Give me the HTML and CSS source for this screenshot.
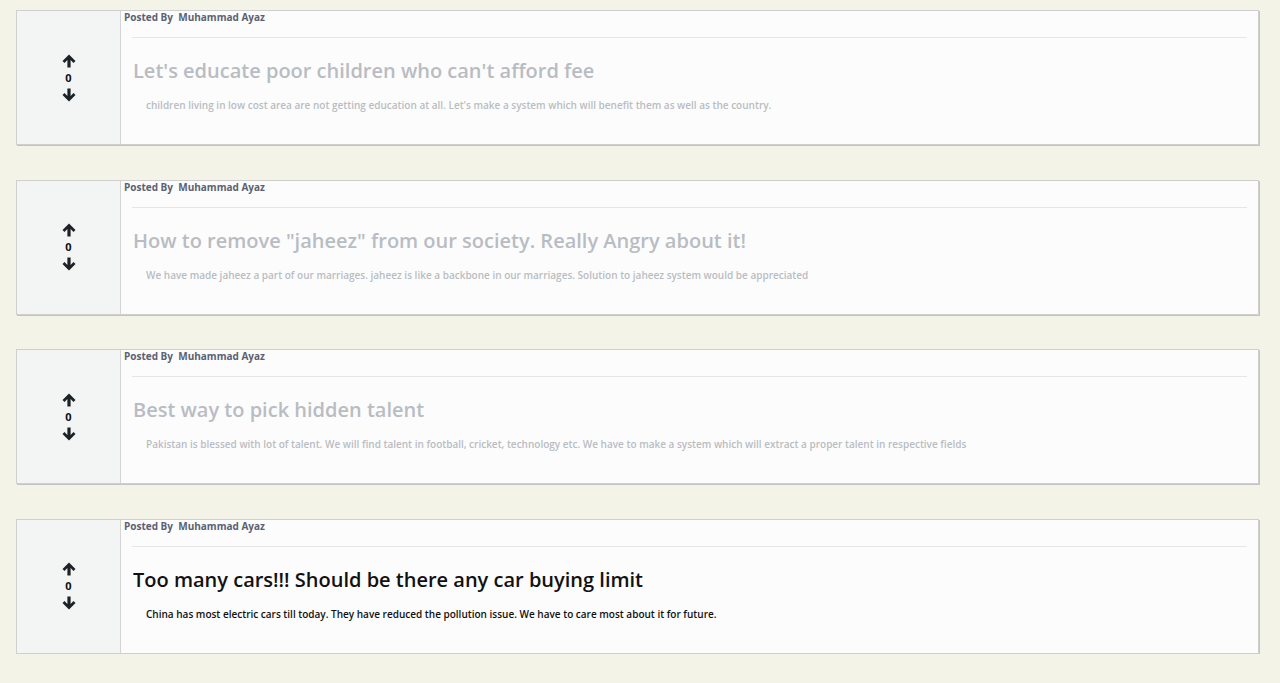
FILE: index.html
```html
<!DOCTYPE html>
<html>
<head>
<meta charset="utf-8">
<link rel="stylesheet" href="styles.css">
</head>
<body>
<div class="list">
  <div class="card faded">
    <div class="vote">
      <svg class="arrow" viewBox="0 0 14 14"><path d="M7 0.5 L13.5 7 L11.5 9 L8.6 6.1 L8.6 13.5 L5.4 13.5 L5.4 6.1 L2.5 9 L0.5 7 Z"/></svg>
      <span class="count">0</span>
      <svg class="arrow" viewBox="0 0 14 14"><path d="M7 13.5 L13.5 7 L11.5 5 L8.6 7.9 L8.6 0.5 L5.4 0.5 L5.4 7.9 L2.5 5 L0.5 7 Z"/></svg>
    </div>
    <div class="body">
      <div class="meta">Posted By&nbsp; Muhammad Ayaz</div>
      <hr class="rule">
      <h2 class="title">Let's educate poor children who can't afford fee</h2>
      <p class="desc">children living in low cost area are not getting education at all. Let's make a system which will benefit them as well as the country.</p>
    </div>
  </div>
  <div class="card faded">
    <div class="vote">
      <svg class="arrow" viewBox="0 0 14 14"><path d="M7 0.5 L13.5 7 L11.5 9 L8.6 6.1 L8.6 13.5 L5.4 13.5 L5.4 6.1 L2.5 9 L0.5 7 Z"/></svg>
      <span class="count">0</span>
      <svg class="arrow" viewBox="0 0 14 14"><path d="M7 13.5 L13.5 7 L11.5 5 L8.6 7.9 L8.6 0.5 L5.4 0.5 L5.4 7.9 L2.5 5 L0.5 7 Z"/></svg>
    </div>
    <div class="body">
      <div class="meta">Posted By&nbsp; Muhammad Ayaz</div>
      <hr class="rule">
      <h2 class="title">How to remove "jaheez" from our society. Really Angry about it!</h2>
      <p class="desc">We have made jaheez a part of our marriages. jaheez is like a backbone in our marriages. Solution to jaheez system would be appreciated</p>
    </div>
  </div>
  <div class="card faded">
    <div class="vote">
      <svg class="arrow" viewBox="0 0 14 14"><path d="M7 0.5 L13.5 7 L11.5 9 L8.6 6.1 L8.6 13.5 L5.4 13.5 L5.4 6.1 L2.5 9 L0.5 7 Z"/></svg>
      <span class="count">0</span>
      <svg class="arrow" viewBox="0 0 14 14"><path d="M7 13.5 L13.5 7 L11.5 5 L8.6 7.9 L8.6 0.5 L5.4 0.5 L5.4 7.9 L2.5 5 L0.5 7 Z"/></svg>
    </div>
    <div class="body">
      <div class="meta">Posted By&nbsp; Muhammad Ayaz</div>
      <hr class="rule">
      <h2 class="title">Best way to pick hidden talent</h2>
      <p class="desc">Pakistan is blessed with lot of talent. We will find talent in football, cricket, technology etc. We have to make a system which will extract a proper talent in respective fields</p>
    </div>
  </div>
  <div class="card">
    <div class="vote">
      <svg class="arrow" viewBox="0 0 14 14"><path d="M7 0.5 L13.5 7 L11.5 9 L8.6 6.1 L8.6 13.5 L5.4 13.5 L5.4 6.1 L2.5 9 L0.5 7 Z"/></svg>
      <span class="count">0</span>
      <svg class="arrow" viewBox="0 0 14 14"><path d="M7 13.5 L13.5 7 L11.5 5 L8.6 7.9 L8.6 0.5 L5.4 0.5 L5.4 7.9 L2.5 5 L0.5 7 Z"/></svg>
    </div>
    <div class="body">
      <div class="meta">Posted By&nbsp; Muhammad Ayaz</div>
      <hr class="rule">
      <h2 class="title">Too many cars!!! Should be there any car buying limit</h2>
      <p class="desc">China has most electric cars till today. They have reduced the pollution issue. We have to care most about it for future.</p>
    </div>
  </div>
</div>
</body>
</html>
```
FILE: styles.css
```css
html, body {
  margin: 0;
  padding: 0;
  background: #f4f3e8;
  font-family: "Open Sans", "DejaVu Sans", sans-serif;
}
.list {
  padding: 10px 21px 0 16px;
  display: flex;
  flex-direction: column;
  gap: 34.5px;
}
.card {
  display: flex;
  height: 133px;
  background: #fcfcfc;
  border: 1px solid #cfcfcf;
  box-shadow: 1px 1px 0 #c4c4c4;
}
.vote {
  width: 103px;
  flex: none;
  background: #f2f5f4;
  border-right: 1px solid #d4d4d4;
  display: flex;
  flex-direction: column;
  align-items: center;
  justify-content: center;
}
.arrow {
  width: 14px;
  height: 14px;
  fill: #1c2226;
}
.count {
  font-size: 11px;
  font-weight: 700;
  color: #111;
  line-height: 20px;
}
.body {
  flex: 1;
  padding: 0 11px 0 3px;
}
.meta {
  font-size: 10px;
  font-weight: 700;
  color: #5b6172;
  line-height: 13px;
}
.rule {
  margin: 13px 0 0 8px;
  border: 0;
  border-top: 1px solid #e6e6e6;
}
.title {
  margin: 20px 0 0 9px;
  font-size: 20px;
  font-weight: 600;
  color: #111;
  line-height: 26px;
}
.desc {
  margin: 14px 0 0 22px;
  font-size: 10px;
  font-weight: 600;
  color: #111;
}
.faded .title { color: #b9bcc2; }
.faded .desc { color: #b9bcc2; }
```
